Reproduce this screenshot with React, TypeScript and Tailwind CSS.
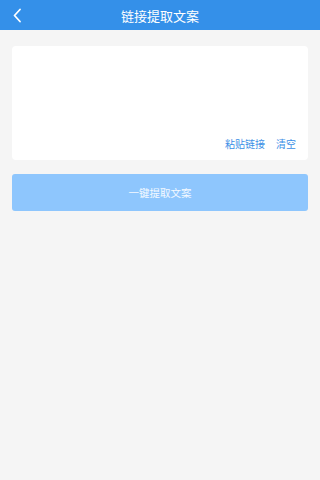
export default function App() {
  return (
    <div
      className="min-h-[480px] w-full bg-[#f5f5f5]"
      style={{ fontFamily: '"Noto Sans CJK SC", "Noto Sans", sans-serif' }}
    >
      {/* header */}
      <div className="relative flex h-[30px] items-center justify-center bg-[#3490e9]">
        <button className="absolute left-[9px] top-[7px] flex h-4 w-4 items-center justify-center">
          <svg width="10" height="15" viewBox="0 0 10 15" fill="none">
            <path d="M8 1.5L2.5 7.5L8 13.5" stroke="#fff" strokeWidth="1.8" strokeLinecap="round" strokeLinejoin="round" />
          </svg>
        </button>
        <h1 className="text-[13px] leading-none text-white">链接提取文案</h1>
      </div>

      <div className="px-3 pt-4">
        {/* text area card */}
        <div className="flex h-[114px] flex-col justify-end rounded-[4px] bg-white px-3 pb-[11px]">
          <div className="flex justify-end gap-[11px] text-[10px] leading-none text-[#3b8fe6]">
            <span>粘贴链接</span>
            <span>清空</span>
          </div>
        </div>

        {/* action button */}
        <button className="mt-[14px] flex h-[37px] w-full items-center justify-center rounded-[3px] bg-[#8ec6fd] text-[10.5px] text-white/90">
          一键提取文案
        </button>
      </div>
    </div>
  );
}
